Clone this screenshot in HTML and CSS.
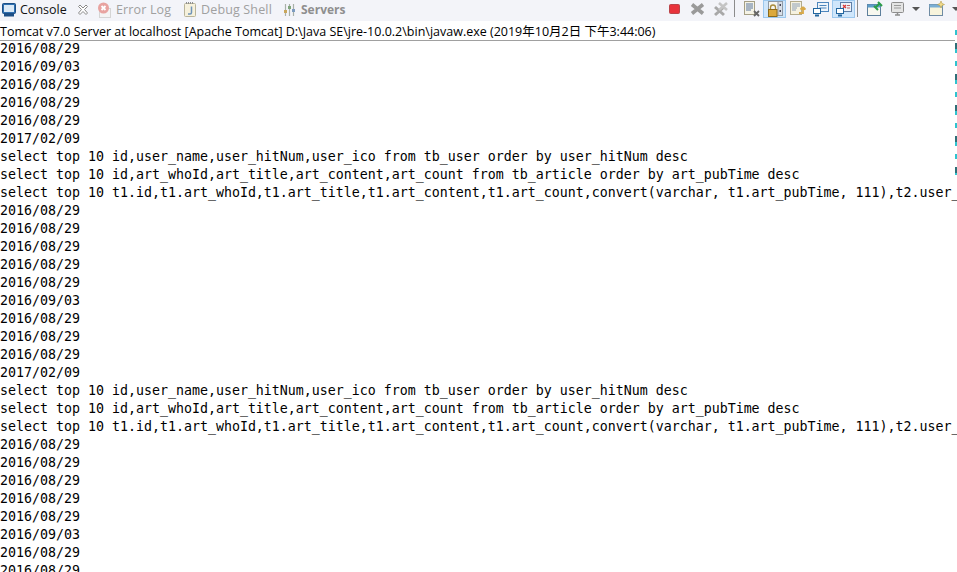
FILE: index.html
```html
<!DOCTYPE html>
<html lang="en">
<head>
<meta charset="utf-8">
<title>Console</title>
<link rel="stylesheet" href="styles.css">
</head>
<body>
<div class="view">
  <div class="tabbar">
    <div class="tab tab-console">
      <svg class="ico" width="14" height="14" viewBox="0 0 14 14"><rect x="0.500" y="0.500" width="13" height="10" rx="1" fill="#2f6fb0" stroke="#1d4f86"/><rect x="2" y="2" width="10" height="7" fill="#dbe9f6"/><rect x="2" y="11" width="10" height="2.500" fill="#1d4f86"/></svg>
      <span class="tab-label active">Console</span>
      <svg class="close" width="12" height="12" viewBox="0 0 12 12"><path d="M1.500 2.500 3 1 6 4 9 1l1.500 1.500-3 3 3 3.500L9 10.500 6 7.500 3 10.500 1.500 9l3-3.500z" fill="#fff" stroke="#8a8a8a"/></svg>
    </div>
    <div class="tab tab-error">
      <svg class="ico" width="15" height="16" viewBox="0 0 15 16"><rect x="2.500" y="6.500" width="11" height="9" fill="#f4f4f4" stroke="#d5d5d5"/><circle cx="6.500" cy="6" r="5.500" fill="#e8a3a0"/><path d="M4.500 4l4 4M8.500 4l-4 4" stroke="#fff" stroke-width="1.800"/></svg>
      <span class="tab-label">Error Log</span>
    </div>
    <div class="tab tab-debug">
      <svg class="ico" width="12" height="15" viewBox="0 0 12 15"><rect x="0.500" y="1.500" width="11" height="13" rx="1" fill="#f6f1dc" stroke="#b9b49a"/><path d="M2 1h8" stroke="#8f8f8f" stroke-width="2" stroke-dasharray="1 1"/><path d="M7.500 4.500v6q0 1.500-1.500 1.500H4" fill="none" stroke="#6f94b8" stroke-width="1.500"/></svg>
      <span class="tab-label">Debug Shell</span>
    </div>
    <div class="tab tab-servers">
      <svg class="ico" width="13" height="14" viewBox="0 0 13 14"><path d="M2.500 1v12M6.500 1v12M10.500 1v12" stroke="#a8b0a8" stroke-width="1.200"/><rect x="1" y="7" width="3" height="3" fill="#c9a75c"/><rect x="5" y="3" width="3" height="3" fill="#7fa57a"/><rect x="9" y="6" width="3" height="3" fill="#7d9cc0"/></svg>
      <span class="tab-label strong">Servers</span>
    </div>
    <div class="toolbar">
      <span class="tool"><svg width="13" height="12" viewBox="0 0 13 12"><rect x="1.500" y="1.500" width="10" height="9" rx="1" fill="#e8333c" stroke="#b9454a"/></svg></span>
      <span class="tool"><svg width="15" height="14" viewBox="0 0 15 14"><path d="M2 2.500l11 9M13 2.500l-11 9" stroke="#9a9a9a" stroke-width="3.600"/></svg></span>
      <span class="tool"><svg width="16" height="16" viewBox="0 0 16 16"><path d="M2 6l9 8M11 6l-9 8" stroke="#a8a8a8" stroke-width="3"/><path d="M6 2l8 7M14 2L6 9" stroke="#c4c4c4" stroke-width="2.600"/></svg></span>
      <span class="sep"></span>
      <span class="tool"><svg width="16" height="16" viewBox="0 0 16 16"><rect x="0.500" y="0.500" width="10" height="13" fill="#f5f3e6" stroke="#a59f85"/><path d="M2 3h7M2 5h7M2 7h7M2 9h5" stroke="#5a76a0"/><path d="M10 10l5 5M15 10l-5 5" stroke="#666" stroke-width="1.800"/></svg></span>
      <span class="tool on"><svg width="16" height="16" viewBox="0 0 16 16"><rect x="1.500" y="0.500" width="14" height="14" fill="#f5f5f0" stroke="#8f9aa6"/><rect x="11" y="0.500" width="4.500" height="14" fill="#d8dee6" stroke="#8f9aa6"/><rect x="12.500" y="3" width="1.500" height="2" fill="#445"/><rect x="12.500" y="9" width="1.500" height="2" fill="#445"/><path d="M3.500 8.500V6.500a2.500 2.500 0 0 1 5 0v2" fill="none" stroke="#a88c3c" stroke-width="1.300"/><rect x="1.500" y="8.500" width="8.500" height="7" fill="#dca93c" stroke="#8c6a1c"/></svg></span>
      <span class="tool"><svg width="16" height="16" viewBox="0 0 16 16"><rect x="0.500" y="0.500" width="11" height="13" fill="#f5f1df" stroke="#b3ab8c"/><path d="M2 3h8M2 5h8M2 7h5M2 9h4" stroke="#8da0b8"/><path d="M9 12h4V6M13 6l-2.500 2.500M13 6l2.500 2.500" fill="none" stroke="#d8a94a" stroke-width="1.800"/></svg></span>
      <span class="tool"><svg width="16" height="15" viewBox="0 0 16 15"><rect x="4.500" y="0.500" width="11" height="9" fill="#eef4fb" stroke="#4f86bd"/><path d="M6.500 3.500h7M6.500 6h7" stroke="#4f86bd"/><rect x="0.500" y="6.500" width="7" height="5" fill="#fff" stroke="#23669f"/><path d="M2 13.500h4" stroke="#23669f" stroke-width="2"/></svg></span>
      <span class="tool on"><svg width="16" height="15" viewBox="0 0 16 15"><rect x="4.500" y="0.500" width="11" height="9" fill="#eef2f8" stroke="#5f7ea6"/><path d="M7 3l3 3M10 3L7 6" stroke="#d93a3a" stroke-width="1.300"/><path d="M11 3.500h3M11 6h3" stroke="#c06060"/><rect x="0.500" y="6.500" width="7" height="5" fill="#fff" stroke="#23669f"/><path d="M2 13.500h4" stroke="#23669f" stroke-width="2"/></svg></span>
      <span class="sep"></span>
      <span class="tool"><svg width="16" height="16" viewBox="0 0 16 16"><rect x="0.500" y="3.500" width="13" height="11" fill="#f7f7ef" stroke="#5d7f9c"/><rect x="0.500" y="3.500" width="13" height="3" fill="#5d9cc9"/><path d="M8 7l5-5M11 1l4 4M7 5l4 4" stroke="#2b9c48" stroke-width="2"/></svg></span>
      <span class="tool"><svg width="13" height="14" viewBox="0 0 13 14"><rect x="0.500" y="0.500" width="12" height="10" rx="1" fill="#e4e4e4" stroke="#8d8d8d"/><path d="M3 3.500h7M3 6h7" stroke="#9a9a9a"/><path d="M4 13h5M6.500 10.500V13" stroke="#8d8d8d" stroke-width="1.500"/></svg></span>
      <span class="caret caret-a"></span>
      <span class="tool"><svg width="16" height="16" viewBox="0 0 16 16"><rect x="0.500" y="3.500" width="13" height="11" fill="#f8f4dc" stroke="#6f8ba3"/><rect x="0.500" y="3.500" width="13" height="3" fill="#7aaed4"/><path d="M12 0l1 2.500 2.500 1L13 4.500 12 7l-1-2.500-2.500-1L11 2.500z" fill="#f2dc8c" stroke="#b79c48" stroke-width="0.600"/></svg></span>
      <span class="caret caret-b"></span>
    </div>
  </div>
  <div class="titlebar">Tomcat v7.0 Server at localhost [Apache Tomcat] D:\Java SE\jre-10.0.2\bin\javaw.exe (2019年10月2日 下午3:44:06)</div>
  <pre class="output">2016/08/29
2016/09/03
2016/08/29
2016/08/29
2016/08/29
2017/02/09
select top 10 id,user_name,user_hitNum,user_ico from tb_user order by user_hitNum desc
select top 10 id,art_whoId,art_title,art_content,art_count from tb_article order by art_pubTime desc
select top 10 t1.id,t1.art_whoId,t1.art_title,t1.art_content,t1.art_count,convert(varchar, t1.art_pubTime, 111),t2.user_name
2016/08/29
2016/08/29
2016/08/29
2016/08/29
2016/08/29
2016/09/03
2016/08/29
2016/08/29
2016/08/29
2017/02/09
select top 10 id,user_name,user_hitNum,user_ico from tb_user order by user_hitNum desc
select top 10 id,art_whoId,art_title,art_content,art_count from tb_article order by art_pubTime desc
select top 10 t1.id,t1.art_whoId,t1.art_title,t1.art_content,t1.art_count,convert(varchar, t1.art_pubTime, 111),t2.user_name
2016/08/29
2016/08/29
2016/08/29
2016/08/29
2016/08/29
2016/09/03
2016/08/29
2016/08/29</pre>
  <div class="edge"></div>
</div>
</body>
</html>
```
FILE: styles.css
```css
html, body { margin: 0; padding: 0; background: #fff; }
.view { position: relative; width: 957px; height: 572px; overflow: hidden; display: flex; flex-direction: column; }
.tabbar { flex: none; height: 21px; background: #f3f4f9; display: flex; align-items: flex-start; font-family: "Open Sans", "Noto Sans", sans-serif; font-size: 12.5px; line-height: 19px; }
.tab { display: flex; align-items: center; flex: none; height: 19px; }
.tab-console { width: 97px; padding-left: 2px; box-sizing: border-box; gap: 4px; }
.tab-error { width: 87px; gap: 4px; }
.tab-debug { width: 99px; gap: 5px; }
.tab-servers { gap: 5px; }
.ico { flex: none; display: block; }
.close { flex: none; margin-left: 6px; }
.tab-label { color: #a0a0a0; white-space: nowrap; letter-spacing: 0.15px; }
.tab-label.active { color: #111; letter-spacing: 0; }
.tab-label.strong { font-weight: 700; letter-spacing: 0; color: #8f8f8f; font-size: 12px; }
.toolbar { margin-left: auto; margin-right: -3px; display: flex; align-items: flex-start; height: 18px; flex: none; }
.tool { display: flex; align-items: center; justify-content: center; width: 23px; height: 18px; box-sizing: border-box; flex: none; }
.tool.on { background: #cfe6fb; border: 1px solid #9cc8ee; }
.sep { width: 1px; height: 17px; background: #8c8c8c; margin: 0 5px 0 2px; flex: none; }
.caret { width: 0; height: 0; border-left: 4px solid transparent; border-right: 4px solid transparent; border-top: 4px solid #555; margin-top: 7px; flex: none; }
.caret-a { margin-left: 3px; margin-right: 5px; }
.caret-b { margin-left: 4px; }
.titlebar { flex: none; height: 19px; line-height: 21px; border-bottom: 1px solid #a0a0a0; font-family: "Open Sans", "Noto Sans CJK SC", sans-serif; font-size: 12.5px; color: #000; white-space: nowrap; overflow: hidden; }
.output { flex: 1; margin: -1px 0 0; overflow: hidden; white-space: pre; font-family: "DejaVu Sans Mono", monospace; font-size: 13.29px; line-height: 18px; color: #000; }
.edge { position: absolute; right: 0; top: 30px; width: 2px; height: 145px; background: repeating-linear-gradient(#2fc4cf 0 5px, #fff 5px 13px, #2f6f78 13px 19px, #2fc4cf 19px 23px, #fff 23px 31px); }
```
